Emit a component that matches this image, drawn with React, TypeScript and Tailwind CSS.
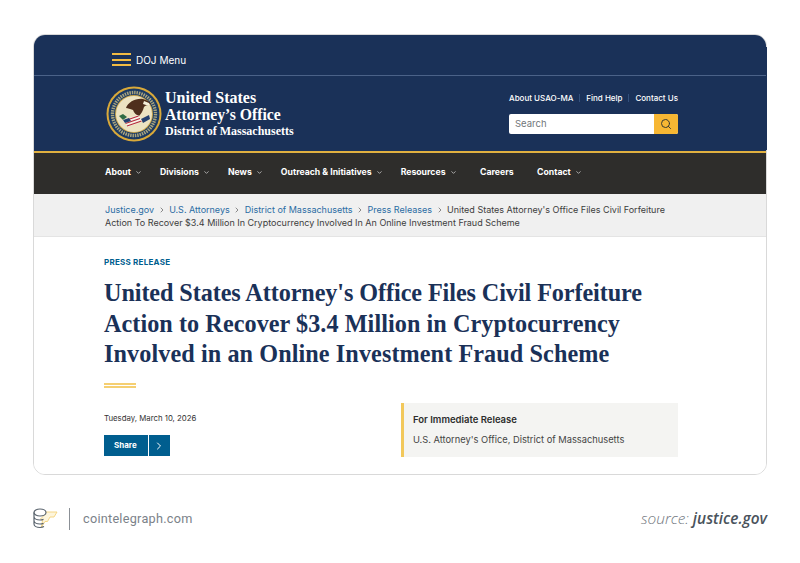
import { ChevronDown, ChevronRight, Search } from 'lucide-react';

const sans = 'font-[Inter,"Liberation_Sans",sans-serif]';
const serif = 'font-["Liberation_Serif",serif]';

const navItems = [
  { label: 'About', menu: true },
  { label: 'Divisions', menu: true },
  { label: 'News', menu: true },
  { label: 'Outreach & Initiatives', menu: true },
  { label: 'Resources', menu: true },
  { label: 'Careers', menu: false },
  { label: 'Contact', menu: true },
];

function Seal() {
  return (
    <svg width="56" height="56" viewBox="0 0 56 56" className="shrink-0">
      <circle cx="28" cy="28" r="27.5" fill="#d9a93a" />
      <circle cx="28" cy="28" r="25.5" fill="#1b3a63" />
      <circle cx="28" cy="28" r="21.5" fill="none" stroke="#a9a47e" strokeWidth="3.4" strokeDasharray="1.5 0.9" />
      <circle cx="28" cy="28" r="19" fill="#c9a44a" />
      <circle cx="28" cy="28" r="18" fill="#ece3c2" />
      <path d="M20 22c2-6 10-10 17-9 4 1 7 3 8 5l-3 1c-2 0-3 1-4 2-1 4-3 7-5 9-3-1-5-3-6-6-3-1-5-2-7-2z" fill="#4f2f1c" />
      <path d="M38 15l5 2 1 2-4 0-3-1z" fill="#f6f0da" />
      <path d="M13 30l4-2 4 3-4 3z" fill="#2f6b43" />
      <path d="M35 33l8-4 1 4-7 4z" fill="#24406f" />
      <path d="M17 34l15-5 4 6-14 6z" fill="#f6f2e6" />
      <path d="M18 35l14.5-5M19.500 37.500l14.500-5M21 40l14.500-5" stroke="#b5293a" strokeWidth="1.100" />
      <path d="M17 34l6-2 2 3-6 2z" fill="#24406f" />
    </svg>
  );
}

function CtLogo() {
  return (
    <svg width="25" height="21" viewBox="0 0 25 21" fill="none" className="shrink-0">
      <path d="M8 4h16l-3 5h-4l-2.500 4.500h-2.500l-3.500 5.500 1-6.500-2-1.500 2.500-2.500z" fill="#fdf5dc" stroke="#f4d27a" strokeWidth="0.900" strokeLinejoin="round" />
      <ellipse cx="7" cy="4.500" rx="6" ry="3.500" fill="white" stroke="#59636d" strokeWidth="1.200" />
      <path d="M1 4.500v11.500c0 2 2.700 3.500 6 3.500 1.600 0 3-.3 4-.9M1 8.500c0 2 2.700 3.500 6 3.500 1.300 0 2.500-.2 3.500-.6M1 12.500c0 2 2.700 3.500 6 3.500 1.300 0 2.500-.2 3.500-.6" stroke="#59636d" strokeWidth="1.200" />
    </svg>
  );
}

export default function App() {
  return (
    <div className={`w-[800px] h-[563px] bg-white overflow-hidden pt-[34px] px-[33px] ${sans}`}>
      <div className="relative w-[734px] h-[441px]">
        <div className="w-full h-full rounded-[12px] border border-[#d9d9d9] overflow-hidden flex flex-col">
          <div className="h-[41px] bg-[#1a3158] border-b border-[#4b6288] pl-[78px] pt-[18px] flex items-start gap-[5px]">
            <div className="w-[19px] flex flex-col gap-[3.5px]">
              <div className="h-[2px] bg-[#f2bb43]" />
              <div className="h-[2px] bg-[#f2bb43]" />
              <div className="h-[2px] bg-[#f2bb43]" />
            </div>
            <span className="text-[10px] leading-[14px] text-white">DOJ Menu</span>
          </div>

          <div className="h-[75px] bg-[#1a3158] pl-[72px] pr-[88px] flex items-center justify-between">
            <div className="flex items-center gap-[3px]">
              <Seal />
              <div className={`${serif} text-white font-bold`}>
                <div className="text-[16px] leading-[17px]">United States</div>
                <div className="text-[15.700px] leading-[18px]">Attorney’s Office</div>
                <div className="text-[12px] leading-[15px]">District of Massachusetts</div>
              </div>
            </div>
            <div className="w-[169px] flex flex-col gap-[11px]">
              <div className="flex items-center justify-between whitespace-nowrap text-[8px] font-medium text-white leading-[10px]">
                <span>About USAO-MA</span>
                <span className="w-px h-[8px] bg-[#33507c]" />
                <span>Find Help</span>
                <span className="w-px h-[8px] bg-[#33507c]" />
                <span>Contact Us</span>
              </div>
              <div className="h-[20px] flex rounded-[2px] overflow-hidden bg-white">
                <span className="flex-1 pl-[6px] text-[9.500px] leading-[20px] text-[#71767a]">Search</span>
                <div className="w-[24px] bg-[#f7b733] flex items-center justify-center">
                  <Search size={12} strokeWidth={2} className="text-[#3a3a30]" />
                </div>
              </div>
            </div>
          </div>

          <div className="h-[43px] bg-[#2e2d2b] border-t-2 border-[#e0b040] pl-[71px] pb-[2px] flex items-center">
            <div className="flex items-center gap-[18px] text-[8.700px] font-bold text-white">
              {navItems.map((item, i) => (
                <div
                  key={item.label}
                  className={`flex items-center gap-[4px] whitespace-nowrap ${i > 4 ? 'ml-[5.500px]' : ''}`}
                >
                  <span>{item.label}</span>
                  {item.menu && <ChevronDown size={7} strokeWidth={2.500} className="text-[#d5d5d5]" />}
                </div>
              ))}
            </div>
          </div>

          <div className="h-[43px] bg-[#f0f0f0] border-b border-[#e4e4e4] pl-[71px] pr-[89px] pt-[9px] text-[9px] leading-[13px] text-[#3d3d3d]">
            <div className="flex items-center whitespace-nowrap">
              <span className="text-[#2a6ca3]">Justice.gov</span>
              <ChevronRight size={8} className="mx-[3.500px] text-[#555]" />
              <span className="text-[#2a6ca3]">U.S. Attorneys</span>
              <ChevronRight size={8} className="mx-[3.500px] text-[#555]" />
              <span className="text-[#2a6ca3]">District of Massachusetts</span>
              <ChevronRight size={8} className="mx-[3.500px] text-[#555]" />
              <span className="text-[#2a6ca3]">Press Releases</span>
              <ChevronRight size={8} className="mx-[3.500px] text-[#555]" />
              <span>United States Attorney's Office Files Civil Forfeiture</span>
            </div>
            <div className="whitespace-nowrap">Action To Recover $3.4 Million In Cryptocurrency Involved In An Online Investment Fraud Scheme</div>
          </div>

          <div className="flex-1 bg-white pl-[70px] pr-[88px] pt-[20px]">
            <div className="text-[8px] leading-[10px] font-bold text-[#005e8f] tracking-[0.03em]">PRESS RELEASE</div>
            <h1 className={`${serif} mt-[11px] text-[24.200px] leading-[30.500px] font-bold text-[#1a3158] whitespace-nowrap`}>
              <div className="tracking-[-0.08px]">United States Attorney's Office Files Civil Forfeiture</div>
              <div className="tracking-[0.06px]">Action to Recover $3.4 Million in Cryptocurrency</div>
              <div className="tracking-[0.09px]">Involved in an Online Investment Fraud Scheme</div>
            </h1>
            <div className="mt-[13.500px] w-[32px] h-[1px] border-y-2 border-[#f5cf72] box-content" />
            <div className="mt-[15px] flex">
              <div className="w-[297px] pt-[9px]">
                <div className="text-[7.800px] leading-[12px] text-[#333]">Tuesday, March 10, 2026</div>
                <div className="mt-[11px] w-[66px] h-[21px] bg-[#005e8f] flex items-center text-white">
                  <span className="w-[45px] pl-[10px] text-[8px] font-bold border-r border-white leading-[21px]">Share</span>
                  <ChevronRight size={12} strokeWidth={2} className="ml-[4px]" />
                </div>
              </div>
              <div className="w-[277px] h-[54px] bg-[#f4f4f2] border-l-[3px] border-[#f2c85b] pl-[9px] pt-[11px]">
                <div className="text-[9.500px] leading-[12px] font-semibold text-[#2d2d2d]">For Immediate Release</div>
                <div className="mt-[8px] text-[9.300px] leading-[12px] text-[#444]">U.S. Attorney's Office, District of Massachusetts</div>
              </div>
            </div>
          </div>
        </div>
        <div className="absolute right-0 top-[13px] h-[103px] w-px bg-[#1a3158]" />
      </div>

      <div className="mt-[32px] flex items-center justify-between">
        <div className="flex items-center">
          <CtLogo />
          <div className="w-px h-[22px] bg-[#8b9096] ml-[11px] mr-[13px]" />
          <span className="font-[Roboto,sans-serif] text-[12.700px] tracking-[0.02em] text-[#7b8289]">cointelegraph.com</span>
        </div>
        <div className='font-["Open_Sans",sans-serif] italic font-light text-[15.400px] text-[#6f767d]'>
          source: <span className="font-semibold text-[#4a535c]">justice.gov</span>
        </div>
      </div>
    </div>
  );
}
